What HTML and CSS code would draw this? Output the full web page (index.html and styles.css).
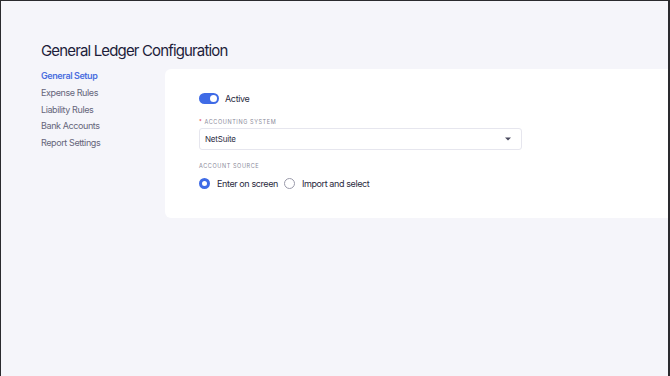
FILE: index.html
```html
<!DOCTYPE html>
<html>
<head>
  <title>General Ledger Configuration</title>
  <link rel="stylesheet" href="styles.css">
</head>
<body>
  <div class="frame">
    <h1 class="page-title">General Ledger Configuration</h1>
    <div class="layout">
      <nav class="side-nav">
        <a class="nav-item active">General Setup</a>
        <a class="nav-item">Expense Rules</a>
        <a class="nav-item">Liability Rules</a>
        <a class="nav-item">Bank Accounts</a>
        <a class="nav-item">Report Settings</a>
      </nav>
      <div class="card">
        <div class="toggle-row">
          <span class="toggle"><span class="knob"></span></span>
          <span class="toggle-label">Active</span>
        </div>
        <div class="field">
          <label class="field-label"><span class="req">*</span> Accounting System</label>
          <div class="select">
            <span>NetSuite</span>
            <svg class="caret" width="6" height="4" viewBox="0 0 6 4"><path d="M0 0.5h6L3 3.5z" fill="#4a4a5e"/></svg>
          </div>
        </div>
        <div class="field">
          <label class="field-label">Account Source</label>
          <div class="radio-group">
            <label class="radio checked"><span class="dot"></span>Enter on screen</label>
            <label class="radio"><span class="dot"></span>Import and select</label>
          </div>
        </div>
      </div>
    </div>
  </div>
</body>
</html>
```

FILE: styles.css
```css
html, body {
  margin: 0;
  height: 100%;
}

body {
  font-family: Inter, "Noto Sans", sans-serif;
  background-color: #2a2a2e;
}

.frame {
  box-sizing: border-box;
  height: 375px;
  width: 667px;
  margin: 1px 0 0 1px;
  background-color: #f5f5fa;
  padding-top: 41px;
}

.page-title {
  margin: 0 0 9px 40px;
  font-size: 15px;
  font-weight: 400;
  letter-spacing: -0.85px;
  color: #1d1d3b;
  line-height: 18px;
}

.layout {
  display: flex;
}

.side-nav {
  display: flex;
  flex-direction: column;
  width: 124px;
  padding-left: 40px;
  padding-top: 1px;
}

.nav-item {
  font-size: 9px;
  line-height: 11px;
  letter-spacing: -0.4px;
  color: #66667a;
  margin-bottom: 5.8px;
}

.nav-item.active {
  color: #4c6fe0;
  font-weight: 600;
}

.card {
  flex: 1;
  background-color: #fff;
  border-radius: 6px 0 0 6px;
  height: 149px;
  box-sizing: border-box;
  padding: 24px 0 0 34px;
}

.toggle-row {
  display: flex;
  align-items: center;
  gap: 6px;
}

.toggle {
  display: block;
  width: 20px;
  height: 11px;
  border-radius: 6px;
  background-color: #3f6be6;
  position: relative;
}

.knob {
  position: absolute;
  right: 2px;
  top: 2px;
  width: 7px;
  height: 7px;
  border-radius: 50%;
  background-color: #fff;
}

.toggle-label {
  font-size: 9px;
  letter-spacing: -0.35px;
  color: #2a2a40;
}

.field {
  margin-top: 15px;
}

.field + .field {
  margin-top: 13px;
}

.field-label {
  display: block;
  font-size: 5.5px;
  letter-spacing: 0.6px;
  text-transform: uppercase;
  color: #8a8a9a;
  margin-bottom: 3px;
}

.req {
  color: #e0404a;
}

.select {
  box-sizing: border-box;
  width: 323px;
  height: 22px;
  border: 1px solid #e6e6ee;
  border-radius: 3px;
  display: flex;
  align-items: center;
  justify-content: space-between;
  padding: 0 10px 0 5px;
  font-size: 8px;
  letter-spacing: -0.2px;
  color: #2a2a40;
}

.radio-group {
  display: flex;
  gap: 6px;
  margin-top: 9px;
}

.radio {
  display: flex;
  align-items: center;
  gap: 7px;
  font-size: 9px;
  letter-spacing: -0.4px;
  color: #2a2a40;
}

.dot {
  box-sizing: border-box;
  width: 11px;
  height: 11px;
  border-radius: 50%;
  border: 1px solid #9a9aaa;
}

.radio.checked .dot {
  border: 3px solid #3f6be6;
}
```
